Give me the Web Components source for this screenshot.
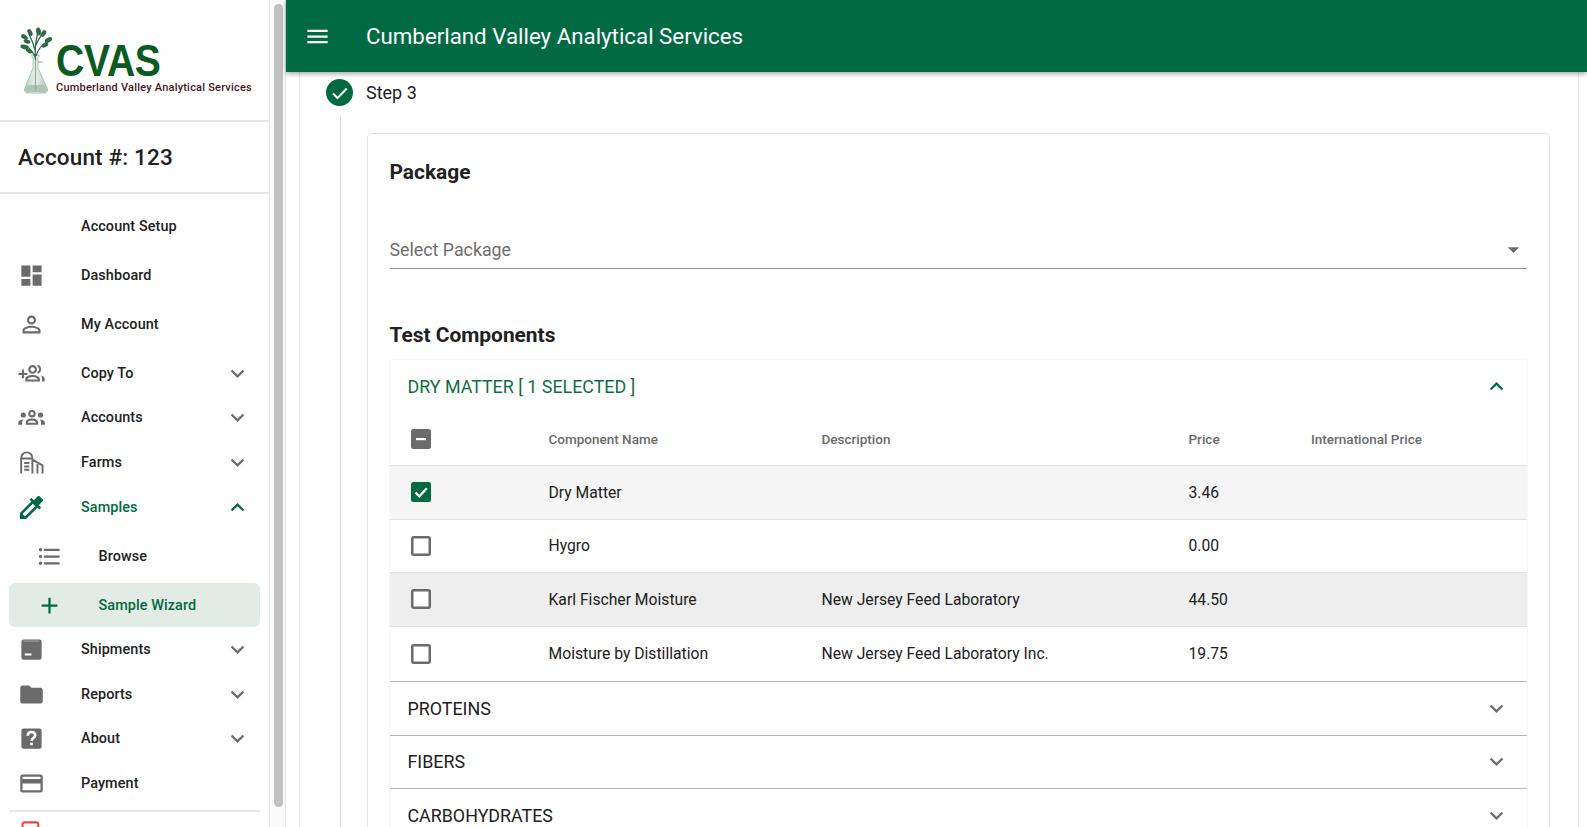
<!DOCTYPE html>
<html lang="en">
<head>
<meta charset="utf-8">
<title>Cumberland Valley Analytical Services</title>
<style>
html,body{margin:0;height:100%;overflow:hidden;background:#fff}
body{font-family:Roboto,"Liberation Sans",sans-serif;color:#212121}
svg[slot=icon]{width:27px;height:27px;fill:#6b6b6b;display:block}
</style>
</head>
<body>
<cv-app>
  <cv-sidebar slot="side">
    <cv-logo></cv-logo>
    <cv-account>Account #: 123</cv-account>
    <cv-nav>
      <cv-nav-item tall>Account Setup</cv-nav-item>
      <cv-nav-item tall>Dashboard<svg slot="icon" viewBox="0 0 24 24"><path d="M3 13h8V3H3v10zm0 8h8v-6H3v6zm10 0h8V11h-8v10zm0-18v6h8V3h-8z"/></svg></cv-nav-item>
      <cv-nav-item tall>My Account<svg slot="icon" viewBox="0 0 24 24"><path d="M12 5.9c1.16 0 2.1.94 2.1 2.1s-.94 2.1-2.1 2.1S9.9 9.16 9.9 8s.94-2.1 2.1-2.1m0 9c2.97 0 6.1 1.46 6.1 2.1v1.1H5.9V17c0-.64 3.13-2.1 6.1-2.1M12 4C9.79 4 8 5.79 8 8s1.79 4 4 4 4-1.79 4-4-1.79-4-4-4zm0 9c-2.67 0-8 1.34-8 4v3h16v-3c0-2.66-5.33-4-8-4z"/></svg></cv-nav-item>
      <cv-nav-item chevron="down" style="margin-top:2.3px">Copy To<svg slot="icon" viewBox="0 0 24 24"><path d="M3.500 8.500V11.500H.5v1.800h3v3h1.800v-3h3v-1.800h-3v-3z"/><path fill-rule="evenodd" d="M13 4.500a3.900 3.900 0 1 1 0 7.800 3.900 3.900 0 0 1 0-7.800zm0 1.900a2 2 0 1 0 0 4 2 2 0 0 0 0-4zM13 13.300c3 0 6.500 1.300 6.500 3.600v2.300H6.500v-2.300c0-2.300 3.500-3.600 6.500-3.600zm0 1.900c-2.300 0-4.500.9-4.600 2.100h9.200c-.1-1.200-2.300-2.100-4.600-2.100z"/><path d="M17.300 4.300c2 .3 3.300 2 3.300 4s-1.300 3.700-3.300 4v-1.800c.9-.3 1.400-1.200 1.400-2.200s-.5-1.900-1.400-2.200zM20.200 13.600c2.200.6 3.500 1.800 3.500 3.200v2.400h-2.300v-2.400c0-1.300-.4-2.300-1.200-3.200z"/></svg></cv-nav-item>
      <cv-nav-item chevron="down">Accounts<svg slot="icon" viewBox="0 0 24 24"><path fill-rule="evenodd" d="M12.400 5.300a3.300 3.300 0 1 1 0 6.600 3.300 3.300 0 0 1 0-6.600zm0 1.800a1.500 1.500 0 1 0 0 3 1.500 1.500 0 0 0 0-3zM12.400 12.900c3 0 5.500 1.300 5.500 3.300v2.300H6.900v-2.300c0-2 2.500-3.300 5.500-3.300zm0 1.800c-1.900 0-3.400.7-3.600 1.900h7.200c-.2-1.200-1.700-1.900-3.600-1.900z"/><circle cx="4.700" cy="9.800" r="2.300"/><circle cx="20" cy="9.800" r="2.300"/><path d="M.2 18.500v-1.700c0-1.700 1.800-3 4.500-3.100-.7.800-1 1.700-1 2.800v2zM24 18.500v-1.700c0-1.700-1.800-3-4.500-3.100.7.800 1 1.700 1 2.800v2z"/></svg></cv-nav-item>
      <cv-nav-item chevron="down">Farms<svg slot="icon" viewBox="0 0 24 24" style="fill:none;stroke:#6b6b6b;stroke-width:1.700"><path d="M2.800 21.800V8a5 5 0 0 1 10 0v13.800M2.800 8.500h10M12.800 9.500l9 5V21.800M17.300 12v9.800M5.500 12.500h4.500M5.500 15.500h4.500M5.500 18.500h4.500"/></svg></cv-nav-item>
      <cv-nav-item chevron="up" active>Samples<svg slot="icon" viewBox="1.500 1.500 21 21" style="fill:#016a43"><path d="M20.710 5.630l-2.340-2.340c-.39-.39-1.020-.39-1.410 0l-3.120 3.120-1.930-1.910-1.410 1.410 1.420 1.420L3 16.250V21h4.750l8.920-8.920 1.420 1.420 1.410-1.410-1.920-1.920 3.120-3.120c.4-.4.4-1.030.01-1.420zM6.920 19L5 17.080l8.060-8.060 1.920 1.920L6.920 19z"/></svg></cv-nav-item>
      <cv-nav-item tall sub style="margin-top:2px">Browse<svg slot="icon" viewBox="0 0 24 24"><path d="M4 10.500c-.83 0-1.500.67-1.500 1.500s.67 1.500 1.500 1.500 1.500-.67 1.500-1.500-.67-1.500-1.500-1.500zm0-6c-.83 0-1.500.67-1.500 1.500S3.170 7.500 4 7.500 5.500 6.830 5.500 6 4.830 4.500 4 4.500zm0 12c-.83 0-1.500.68-1.500 1.500s.68 1.500 1.500 1.500 1.500-.68 1.500-1.500-.67-1.500-1.500-1.500zM7 19h14v-2H7v2zm0-6h14v-2H7v2zm0-8v2h14V5H7z"/></svg></cv-nav-item>
      <cv-nav-item sub selected active>Sample Wizard<svg slot="icon" viewBox="0 0 24 24" style="fill:#016a43"><path d="M19 13h-6v6h-2v-6H5v-2h6V5h2v6h6v2z"/></svg></cv-nav-item>
      <cv-nav-item chevron="down">Shipments<svg slot="icon" viewBox="0 0 24 24"><path fill-rule="evenodd" d="M5 3h14a2 2 0 0 1 2 2v14a2 2 0 0 1-2 2H5a2 2 0 0 1-2-2V5a2 2 0 0 1 2-2zm1 12.500v1.900h6v-1.900z"/><path d="M5 4h14v1H5z" fill="#fff" opacity=".35"/></svg></cv-nav-item>
      <cv-nav-item chevron="down">Reports<svg slot="icon" viewBox="0 0 24 24"><path d="M10 4H4c-1.100 0-1.990.9-1.990 2L2 18c0 1.100.9 2 2 2h16c1.100 0 2-.9 2-2V8c0-1.100-.9-2-2-2h-8l-2-2z"/></svg></cv-nav-item>
      <cv-nav-item chevron="down">About<svg slot="icon" viewBox="0 0 24 24"><rect x="3" y="3" width="18" height="18" rx="2"/><path d="M8.700 9.500c0-2 1.400-3.300 3.300-3.300s3.300 1.200 3.300 2.900c0 2.400-3.300 2.600-3.300 5.100" fill="none" stroke="#fff" stroke-width="2.300"/><rect x="10.850" y="15.700" width="2.300" height="2.300" fill="#fff"/></svg></cv-nav-item>
      <cv-nav-item>Payment<svg slot="icon" viewBox="0 0 24 24"><path d="M20 4H4c-1.110 0-1.990.89-1.990 2L2 18c0 1.110.89 2 2 2h16c1.110 0 2-.89 2-2V6c0-1.110-.89-2-2-2zm0 14H4v-6h16v6zm0-10H4V6h16v2z"/></svg></cv-nav-item>
      <cv-nav-rule></cv-nav-rule>
      <cv-nav-item style="height:27px"><svg slot="icon" viewBox="0 0 24 24" style="fill:none;stroke:#f44336;stroke-width:1.800"><rect x="4" y="3" width="14" height="18" rx="2"/></svg></cv-nav-item>
    </cv-nav>
  </cv-sidebar>
  <cv-scrollbar slot="scroll"></cv-scrollbar>
  <cv-toolbar slot="bar">Cumberland Valley Analytical Services</cv-toolbar>
  <cv-paper slot="main">
    <cv-step label="Step 3">
      <cv-card>
        <cv-heading style="margin-top:24px">Package</cv-heading>
        <cv-select placeholder="Select Package"></cv-select>
        <cv-heading style="margin-top:52px">Test Components</cv-heading>
        <cv-accordion open selected label="DRY MATTER [ 1 SELECTED ]" style="margin-top:11px">
          <cv-row head>
            <cv-check state="mixed"></cv-check><span>Component Name</span><span>Description</span><span>Price</span><span>International Price</span>
          </cv-row>
          <cv-row shade="#f5f5f5">
            <cv-check state="on"></cv-check><span>Dry Matter</span><span></span><span>3.46</span><span></span>
          </cv-row>
          <cv-row>
            <cv-check></cv-check><span>Hygro</span><span></span><span>0.00</span><span></span>
          </cv-row>
          <cv-row shade="#eeeeee">
            <cv-check></cv-check><span>Karl Fischer Moisture</span><span>New Jersey Feed Laboratory</span><span>44.50</span><span></span>
          </cv-row>
          <cv-row last>
            <cv-check></cv-check><span>Moisture by Distillation</span><span>New Jersey Feed Laboratory Inc.</span><span>19.75</span><span></span>
          </cv-row>
        </cv-accordion>
        <cv-accordion label="PROTEINS"></cv-accordion>
        <cv-accordion label="FIBERS"></cv-accordion>
        <cv-accordion label="CARBOHYDRATES"></cv-accordion>
      </cv-card>
    </cv-step>
  </cv-paper>
</cv-app>

<script>
const CHEV_DOWN = 'M16.59 8.59L12 13.17 7.41 8.59 6 10l6 6 6-6z';
const CHEV_UP = 'M12 8l-6 6 1.41 1.41L12 10.83l4.59 4.58L18 14z';
const GREEN = '#016a43';

// small helper, every element here is just a template in a shadow root
function define(name, html, setup) {
  customElements.define(name, class extends HTMLElement {
    constructor() {
      super();
      this.attachShadow({ mode: 'open' });
    }
    connectedCallback() {
      this.shadowRoot.innerHTML = typeof html === 'function' ? html(this) : html;
      if (setup) setup(this);
    }
  });
}

define('cv-app', `
<style>
:host{display:flex;height:827px;overflow:hidden}
.main{flex:1;min-width:0;display:flex;flex-direction:column;position:relative}
</style>
<slot name="side"></slot><slot name="scroll"></slot>
<div class="main"><slot name="bar"></slot><slot name="main"></slot></div>`);

define('cv-sidebar', `
<style>
:host{display:block;width:269px;height:827px;overflow:hidden;background:#fff;flex:none}
</style><slot></slot>`);

define('cv-logo', `
<style>
:host{display:flex;align-items:flex-start;box-sizing:border-box;padding:26px 0 0 18px;border-bottom:2px solid #e6e6e6;height:122px}
svg{width:36px;height:70px;flex:none;display:block}
.txt{margin:19px 0 0 2px;white-space:nowrap}
.big{font:700 44.7px/32px "Liberation Sans",sans-serif;color:#0b5a22;transform:scaleX(.875);transform-origin:0 0;height:32px;letter-spacing:-.3px}
.small{font:500 11px/13px Roboto,sans-serif;color:#4a1622;margin-top:4px;letter-spacing:.21px}
</style>
<svg viewBox="18 26 36 70">
  <defs><linearGradient id="gl" x1="0" x2="1" y1="0" y2="0"><stop offset="0" stop-color="#c2d2c8"/><stop offset=".5" stop-color="#e9f0ea"/><stop offset="1" stop-color="#aec3b5"/></linearGradient></defs>
  <path d="M31 55h8v2l-1 1v10l9.300 20.500c.8 2-.2 4-2.300 4.500H27c-2.100-.5-3.100-2.500-2.300-4.500L33 68V58z" fill="url(#gl)" stroke="#a3bbaa" stroke-width=".8"/>
  <path d="M25.500 87c4-4 8-1 11.500-2s6-1 9 2c.8 3.500-1 5-3 5H28c-2 0-3.200-2-2.500-5z" fill="#afc5b6"/>
  <path d="M35.500 90V60M38 62h5" stroke="#8fae9a" stroke-width="1.200" fill="none"/>
  <g fill="none" stroke="#2e6b4a" stroke-width="1.300"><path d="M35.500 60c-.5-6-1-14 2-26M35.500 58c-2-5-5-9-9-12M36 56c2-6 5-11 11-14M35 50c-1-4-3-10-6-16M35.500 46c2-4 3-7 6-11"/></g>
  <g fill="#2e6b4a">
    <ellipse cx="38.500" cy="31.500" rx="2.400" ry="4" transform="rotate(-10 38.500 31.500)"/>
    <ellipse cx="30" cy="32.500" rx="2.200" ry="3.700" transform="rotate(-30 30 32.500)"/>
    <ellipse cx="43.500" cy="33.500" rx="2.200" ry="3.700" transform="rotate(35 43.500 33.500)"/>
    <ellipse cx="24.500" cy="37" rx="2.200" ry="3.700" transform="rotate(-55 24.500 37)"/>
    <ellipse cx="48.500" cy="40" rx="2.400" ry="4" transform="rotate(60 48.500 40)"/>
    <ellipse cx="24.500" cy="47" rx="2.200" ry="4.300" transform="rotate(-75 24.500 47)"/>
    <ellipse cx="27" cy="41.500" rx="2" ry="3.500" transform="rotate(-70 27 41.500)"/>
    <ellipse cx="45" cy="45" rx="2" ry="3.600" transform="rotate(60 45 45)"/>
    <ellipse cx="29" cy="51" rx="1.900" ry="3.500" transform="rotate(-60 29 51)"/>
  </g>
</svg>
<div class="txt"><div class="big">CVAS</div><div class="small">Cumberland Valley Analytical Services</div></div>`);

define('cv-account', `
<style>
:host{display:flex;align-items:center;height:72px;box-sizing:border-box;padding:0 0 0 18px;border-bottom:2px solid #e6e6e6;font-size:22.5px;font-weight:500;color:#212121;letter-spacing:.15px}
</style><slot></slot>`);

define('cv-nav', `<style>:host{display:block;padding-top:7.500px}</style><slot></slot>`);

define('cv-nav-rule', `<style>:host{display:block;height:2px;background:#e9e9e9;margin:4.500px 9px 7px}</style>`);

define('cv-nav-item', host => {
  const dir = host.getAttribute('chevron');
  const chev = dir ? `<svg class="chev" viewBox="0 0 24 24"><path d="${dir === 'up' ? CHEV_UP : CHEV_DOWN}"/></svg>` : '';
  return `
<style>
:host{display:flex;align-items:center;height:44.7px;box-sizing:border-box;padding:0 18.500px 0 18px;font-weight:500;color:#212121;white-space:nowrap}
:host([tall]){height:49px}
:host([sub]){height:49px;padding-left:35.500px}
:host([active]){color:${GREEN}}
:host([selected]){height:44px;margin:2.500px 9px 0;background:#e3ebe7;border-radius:6px;padding-left:26.500px}
.ic{width:27px;height:27px;flex:none;margin-right:36px}
.lb{flex:1;font-size:14.4px;letter-spacing:.1px}
.chev{width:27px;height:27px;flex:none;fill:${host.hasAttribute('active') ? GREEN : '#6b6b6b'}}
</style>
<div class="ic"><slot name="icon"></slot></div><div class="lb"><slot></slot></div>${chev}`;
});

define('cv-scrollbar', `
<style>
:host{display:block;width:17px;height:827px;flex:none;box-sizing:border-box;background:#fafafa;border-left:1px solid #e6e6e6;border-right:1px solid #e6e6e6;padding:4px 3px 0 4px}
div{width:9px;height:803px;background:#c1c1c1;border-radius:5px}
</style><div></div>`);

define('cv-toolbar', `
<style>
:host{display:flex;align-items:center;height:72px;flex:none;background:${GREEN};color:#fff;font-size:22.300px;position:relative;z-index:2;box-shadow:0 2px 5px rgba(0,0,0,.35);padding-left:18px}
svg{width:27px;height:27px;fill:#fff;flex:none;margin-right:35px}
</style>
<svg viewBox="0 0 24 24"><path d="M3 18h18v-2H3v2zm0-5h18v-2H3v2zm0-7v2h18V6H3z"/></svg><slot></slot>`);

define('cv-paper', `
<style>
:host{display:block;flex:1;min-height:0;overflow:hidden;margin:0 8px 0 13px;box-sizing:border-box;border-left:1px solid #e8e8e8;border-right:1px solid #e8e8e8;padding:7px 28.500px 0 26px}
</style><slot></slot>`);

define('cv-step', host => `
<style>
:host{display:block}
.hd{display:flex;align-items:center;gap:13px;font-size:18px;color:#212121}
svg{width:27px;height:27px;display:block;flex:none}
.bd{margin:9px 0 0 14px;border-left:1px solid #e0e0e0;padding:18px 0 0 25.500px}
</style>
<div class="hd"><svg viewBox="0 0 27 27"><circle cx="13.500" cy="13.500" r="13.500" fill="${GREEN}"/><path d="M7 14.500l4.500 4.500 9.300-9.500" fill="none" stroke="#fff" stroke-width="2"/></svg><span>${host.getAttribute('label')}</span></div>
<div class="bd"><slot></slot></div>`);

define('cv-card', `
<style>
:host{display:block;background:#fff;border:1px solid #e3e3e3;border-radius:5px;box-shadow:0 1px 2px rgba(0,0,0,.06);padding:0 22px}
</style><slot></slot>`);

define('cv-heading', `
<style>
:host{display:block;font-size:20.900px;font-weight:700;line-height:28px;color:#212121}
</style><slot></slot>`);

define('cv-select', host => `
<style>
:host{display:flex;align-items:center;justify-content:space-between;box-sizing:border-box;height:42px;margin-top:41px;padding-top:4px;border-bottom:1.500px solid #909090;font-size:17.800px;color:#6e6e6e}
svg{width:27px;height:27px;fill:#6b6b6b}
</style>
<span>${host.getAttribute('placeholder')}</span><svg viewBox="0 0 24 24"><path d="M7 10l5 5 5-5z"/></svg>`);

define('cv-accordion', host => {
  const open = host.hasAttribute('open');
  return `
<style>
:host{display:block;background:#fff;box-shadow:0 0 2px rgba(0,0,0,.1);border-bottom:1.500px solid #bdbdbd;font-size:17.850px;color:#212121}
.hd{display:flex;align-items:center;justify-content:space-between;height:52.500px;padding:0 17px 0 18px}
:host([selected]) .hd{color:#0f6e44}
svg{width:27px;height:27px;fill:${open ? GREEN : '#6b6b6b'};flex:none}
</style>
<div class="hd"><span>${host.getAttribute('label')}</span><svg viewBox="0 0 24 24"><path d="${open ? CHEV_UP : CHEV_DOWN}"/></svg></div>
${open ? '<slot></slot>' : ''}`;
});

define('cv-row', host => `
<style>
:host{display:grid;grid-template-columns:138px 273px 367px 122.500px 1fr;align-items:center;height:53.500px;box-sizing:border-box;padding-left:21px;border-bottom:1.500px solid #e2e2e2;font-size:15.700px;color:#212121;background:${host.getAttribute('shade') || 'transparent'}}
:host([head]){font-size:13.500px;font-weight:500;color:#6b6b6b}
:host([last]){height:54.500px;border-bottom:0}
</style><slot></slot>`);

define('cv-check', host => {
  const s = host.getAttribute('state');
  let inner = '<rect x="1.250" y="1.250" width="17.500" height="17.500" rx="1.500" fill="#fff" stroke="#6b6b6b" stroke-width="2.500"/>';
  if (s === 'on') inner = `<rect width="20" height="20" rx="2.500" fill="${GREEN}"/><path d="M4.500 10.500l3.800 3.800 7.500-8" fill="none" stroke="#fff" stroke-width="2.300"/>`;
  if (s === 'mixed') inner = '<rect width="20" height="20" rx="2.500" fill="#6b6b6b"/><rect x="5" y="9" width="10" height="2.200" fill="#fff"/>';
  return `<style>:host{display:block;width:20px;height:20px}svg{display:block}</style><svg width="20" height="20" viewBox="0 0 20 20">${inner}</svg>`;
});
</script>
</body>
</html>
